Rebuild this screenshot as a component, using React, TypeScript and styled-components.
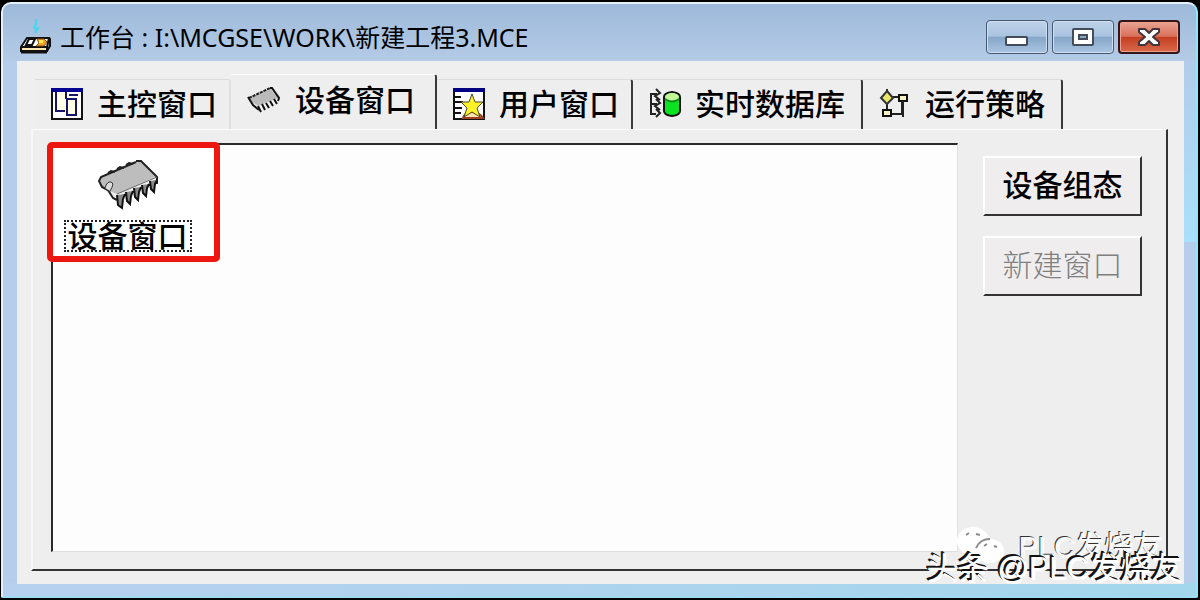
import React from "react";
import styled, { createGlobalStyle } from "styled-components";

const GlobalStyle = createGlobalStyle`
  *, *::before, *::after { box-sizing: border-box; }
  body {
    margin: 0;
    background: #000;
    font-family: "Noto Sans", "Noto Sans CJK SC", sans-serif;
    color: #000;
  }
`;

const Frame = styled.main`
  display: flex;
  flex-direction: column;
  min-height: calc(100vh - 4px);
  margin: 2px 2px 2px 1px;
  padding: 0 12px 12px 14px;
  border: 2px solid #e4f0fb;
  border-right-color: #8ee6fa;
  border-bottom-color: #9fdcf2;
  border-radius: 10px 10px 2px 2px;
  background:
    linear-gradient(#b2cce9, #a9e0fb) right 0 top 56px / 14px 182px no-repeat,
    linear-gradient(90deg, #b7d0ef, #a3d7ec) left 0 bottom 0 / 100% 13px no-repeat,
    linear-gradient(#9db9da, #b4cbe6 56px, #b7cdec 57px);
`;

const TitleBar = styled.header`
  display: flex;
  align-items: center;
  height: 57px;
  padding: 8px 4px 0 2px;
`;

const Title = styled.h1`
  flex: 1;
  margin: 0 0 0 7px;
  font-size: 25px;
  line-height: 32px;
  font-weight: 400;
  white-space: nowrap;
`;

const Controls = styled.div`
  display: flex;
  gap: 4px;
`;

const ControlButton = styled.button<{ $close?: boolean }>`
  display: flex;
  align-items: center;
  justify-content: center;
  width: 62px;
  height: 34px;
  padding: 0;
  border: ${(p) => (p.$close ? "2px solid #33161b" : "1px solid #46586f")};
  border-radius: 4px;
  box-shadow: inset 0 0 0 1px ${(p) => (p.$close ? "#efa08d" : "#cfe0f2")};
  background: ${(p) =>
    p.$close
      ? "linear-gradient(#e9a393, #d9705a 48%, #c43e22 50%, #d9684a)"
      : "linear-gradient(#bed3ea, #a9c3e0 48%, #86a6c8 50%, #a9c5e2)"};
`;

const Client = styled.div`
  flex: 1;
  display: flex;
  flex-direction: column;
  padding: 13px 16px 13px 14px;
  background: #f0eff0;
`;

const TabList = styled.div`
  display: flex;
  align-items: flex-end;
  height: 55px;
  padding-left: 4px;
`;

const Tab = styled.button<{ $active?: boolean; $width: number }>`
  display: flex;
  align-items: center;
  gap: 14px;
  width: ${(p) => p.$width}px;
  height: ${(p) => (p.$active ? 55 : 50)}px;
  padding: 0 0 ${(p) => (p.$active ? 4 : 1)}px 16px;
  border: 0;
  border-top: 1px solid ${(p) => (p.$active ? "#fff" : "#dcdcdc")};
  border-right: 2px solid ${(p) => (p.$active === false ? "#e0e0e0" : "#3a3a3a")};
  border-radius: 0 3px 0 0;
  background: #efeeef;
  font: inherit;
  font-size: 30px;
  line-height: 40px;
  font-weight: 500;
  white-space: nowrap;
  color: #000;
`;

const Panel = styled.section`
  flex: 1;
  display: flex;
  gap: 25px;
  padding: 13px 24px 17px 18px;
  border: 2px solid #333;
  border-top: 1px solid #fbfbfb;
  border-left: 2px solid #fbf6fb;
  background: #eeeeee;
`;

const ItemArea = styled.div`
  flex: 1;
  border: 2px solid #2a2a2a;
  border-right: 1px solid #e2e0ea;
  border-bottom: 1px solid #dedede;
  background: #fdfdfd;
`;

const DeviceItem = styled.button`
  display: flex;
  flex-direction: column;
  align-items: center;
  width: 173px;
  height: 120px;
  margin: -3px 0 0 -6px;
  padding: 11px 12px 0 0;
  border: 6px solid #ee1611;
  border-radius: 5px;
  background: #fff;
  font: inherit;
  color: #000;
`;

const ItemLabel = styled.span`
  display: block;
  width: 128px;
  height: 32px;
  margin-top: 9px;
  border: 2px dotted #222;
  font-size: 30px;
  line-height: 28px;
  font-weight: 500;
  text-align: center;
`;

const Actions = styled.div`
  display: flex;
  flex-direction: column;
  gap: 20px;
  padding-top: 13px;
`;

const ActionButton = styled.button`
  width: 159px;
  height: 60px;
  padding: 0 0 6px;
  border: 2px solid #333;
  border-top-color: #fff;
  border-left-color: #fff;
  background: #efedee;
  font: inherit;
  font-size: 30px;
  font-weight: 500;
  color: #000;
  &:disabled { color: #808080; font-weight: 300; }
`;

const Watermark = styled.div`
  position: absolute;
  right: 18px;
  bottom: 12px;
  width: 260px;
  height: 70px;
  pointer-events: none;
  font-family: "Liberation Sans", "Noto Sans CJK SC", sans-serif;
`;

const MarkLogo = styled.svg`
  position: absolute;
  left: 34px;
  top: 8px;
`;

const MarkBack = styled.span`
  position: absolute;
  right: 20px;
  top: 9px;
  font-size: 29px;
  line-height: 40px;
  white-space: nowrap;
  color: #f8f8f8;
  text-shadow: -1px -1px 0 #333, 1px 1px 0 #fff;
`;

const MarkFront = styled.span`
  position: absolute;
  right: 0;
  top: 31px;
  font-size: 31px;
  line-height: 40px;
  white-space: nowrap;
  color: #fff;
  text-shadow: -1px -1px 0 #111, -2px -2px 0 #111, 1px 1px 0 #fff;
`;

const AppIcon = () => (
  <svg width="34" height="38" viewBox="0 0 34 38" aria-hidden="true">
    <path d="M17 1v5l-2 4 3 2-2 3M20 9l-3 3" stroke="#3fd9f2" strokeWidth="2" fill="none" />
    <path d="M2 29 8 20h22l-2 9v4H2z" fill="#fff" stroke="#111" strokeWidth="2" />
    <path d="M2 29h26M29 20l2 1v7l-3 5" stroke="#111" strokeWidth="2" fill="none" />
    <path d="M2 34h26" stroke="#111" strokeWidth="3" />
    <path d="M3 31h24" stroke="#ffe9b0" strokeWidth="2" />
    <path d="m10 21-3 6h6l3-6z" fill="#fff" stroke="#111" strokeWidth="2" />
    <path d="M18 21h7l3 3-3 4h-8l3-3z" fill="#f2a62c" stroke="#8a4d10" />
    <path d="M20 22h4v3h-4z" fill="#ffe94b" />
  </svg>
);

const WindowIcon = () => (
  <svg width="32" height="32" viewBox="0 0 32 32" aria-hidden="true">
    <path d="M1 2h30v29H1z" fill="#fff" stroke="#111" strokeWidth="2" />
    <path d="M0 0h32v4H0z" fill="#000093" />
    <path d="M5 4h10v18H5z" fill="#ffffe6" />
    <path d="M16 11h9v16h-9z" fill="#ffffe6" />
    <path d="M5 4v19h9M15 4v7M16 11v16h9V11zM18 7h9" fill="none" stroke="#15156a" strokeWidth="2" />
  </svg>
);

const SmallChipIcon = () => (
  <svg width="34" height="28" viewBox="0 0 34 28" aria-hidden="true">
    <path d="M2 11 23 2l9 10-1 4-18 8-8-7z" fill="#f3f3f3" />
    <path d="M3 11 23 2l8 10-20 8-6-4z" fill="#bababa" />
    <path d="M2 12 23 2" fill="none" stroke="#222" strokeWidth="2" strokeDasharray="3 1" />
    <path d="m1 11 5 8 6 5M23 2h2l7 10-1 3" fill="none" stroke="#111" strokeWidth="2" />
    <path d="m11 20 3 6M15 18l3 6M19 17l3 5M23 15l3 5M27 13l3 5" stroke="#111" strokeWidth="2" />
  </svg>
);

const StarIcon = () => (
  <svg width="32" height="32" viewBox="0 0 32 32" aria-hidden="true">
    <path d="M1 2h30v29H1z" fill="#fff" stroke="#111" strokeWidth="2" />
    <path d="M0 0h32v4H0z" fill="#000080" />
    <path d="M2 9h6M2 14h8M2 20h7M2 25h6" stroke="#111" strokeWidth="2" />
    <path d="M10 30q2-6 9-6t11 6z" fill="#ffe3b0" stroke="#a04020" strokeWidth="2" />
    <path d="m19 6 3 8h8l-6 6 3 9-8-5-8 5 3-9-6-6h8z" fill="#fff229" stroke="#4a4526" />
  </svg>
);

const DatabaseIcon = () => (
  <svg width="32" height="32" viewBox="0 0 32 32" aria-hidden="true">
    <path d="M8 6H2v20h5M2 16h6" fill="none" stroke="#222" strokeWidth="2" />
    <path d="m7 1 4 4-5 3 5 4M7 11l4 4-5 3 5 4M7 21l4 4-4 4" fill="none" stroke="#222" strokeWidth="2" />
    <path d="M15 9q0-4 8-5 8 1 8 5v14q0 4-8 5-8-1-8-5z" fill="#0be322" stroke="#111" strokeWidth="2" />
    <ellipse cx="23" cy="9" rx="7" ry="4" fill="#c2f798" />
    <path d="M16 11q7 5 14 0" fill="none" stroke="#128a20" strokeWidth="2" />
  </svg>
);

const StrategyIcon = () => (
  <svg width="32" height="32" viewBox="0 0 32 32" aria-hidden="true">
    <path d="M8 1v4M13 9h8M8 14v10M12 26h11V13" fill="none" stroke="#222" strokeWidth="2" />
    <path d="m8 3 6 7-6 6-6-6z" fill="#e9e86a" stroke="#333" strokeWidth="2" />
    <path d="M20 7h8v6h-8zM4 22h8v6H4z" fill="#f4f3c8" stroke="#111" strokeWidth="2" />
    <path d="M24 13v16" stroke="#222" strokeWidth="2" />
  </svg>
);

const ChipIcon = () => (
  <svg width="62" height="52" viewBox="0 0 62 52" aria-hidden="true">
    <path d="M2 22 5 17 39 3h5l15 15v8L23 43l-9-5-4-5-7-4z" fill="#eee" />
    <path d="m2 22 3-4L39 3h5l14 15-38 17-5-2-5-1-6-5z" fill="#bdbdbd" />
    <path d="M39 2h5l16 16v7M39 3 4 18l-2 4 3 6 6 3 5 8 4 2" fill="none" stroke="#222" strokeWidth="2" />
    <path d="M60 18 20 35" stroke="#666" />
    <path d="M8 29q2-7 6-6t-1 9" fill="#ddd" stroke="#333" />
    <path d="m20 36 1 10 4 3 1-9 2-5M29 33l1 9 3 3 1-8 2-5M37 29l1 9 3 3 1-8 2-5M45 26l1 8 3 3 1-8 2-4M53 22l1 8 3 3 1-8 2-4" fill="#888" stroke="#111" strokeWidth="2" />
    <path d="m11 14 3-2 4 1M20 10l3-2 4 1M29 6l3-2 4 1" fill="none" stroke="#222" strokeWidth="2" />
  </svg>
);

const tabs = [
  { label: "主控窗口", icon: <WindowIcon />, width: 196, active: false },
  { label: "设备窗口", icon: <SmallChipIcon />, width: 206, active: true },
  { label: "用户窗口", icon: <StarIcon />, width: 196 },
  { label: "实时数据库", icon: <DatabaseIcon />, width: 230 },
  { label: "运行策略", icon: <StrategyIcon />, width: 200 },
];

export default function App() {
  return (
    <>
      <GlobalStyle />
      <Frame>
        <TitleBar>
          <AppIcon />
          <Title>工作台 : I:\MCGSE\WORK\新建工程3.MCE</Title>
          <Controls>
            <ControlButton aria-label="最小化">
              <svg width="24" height="18" viewBox="0 0 24 18"><rect x="1" y="9" width="21" height="8" rx="1" fill="#fff" stroke="#444b59" strokeWidth="2" /></svg>
            </ControlButton>
            <ControlButton aria-label="最大化">
              <svg width="22" height="18" viewBox="0 0 22 18"><rect x="1" y="1" width="20" height="16" rx="1" fill="#fff" stroke="#444b59" strokeWidth="2" /><rect x="7" y="7" width="8" height="4" fill="#86a6c8" stroke="#444b59" strokeWidth="2" /></svg>
            </ControlButton>
            <ControlButton $close aria-label="关闭">
              <svg width="22" height="18" viewBox="0 0 22 18"><path d="M1 1h6l4 4 4-4h6v3l-6 5 6 5v3h-6l-4-4-4 4H1v-3l6-5-6-5z" fill="#fff" stroke="#44343b" strokeWidth="2" strokeLinejoin="round" /></svg>
            </ControlButton>
          </Controls>
        </TitleBar>
        <Client>
          <TabList role="tablist">
            {tabs.map((t) => (
              <Tab key={t.label} role="tab" aria-selected={!!t.active} $active={t.active} $width={t.width}>
                {t.icon}
                {t.label}
              </Tab>
            ))}
          </TabList>
          <Panel>
            <ItemArea>
              <DeviceItem>
                <ChipIcon />
                <ItemLabel>设备窗口</ItemLabel>
              </DeviceItem>
            </ItemArea>
            <Actions>
              <ActionButton>设备组态</ActionButton>
              <ActionButton disabled>新建窗口</ActionButton>
            </Actions>
          </Panel>
        </Client>
      </Frame>
      <Watermark>
        <MarkLogo width="50" height="40" viewBox="0 0 50 40" aria-hidden="true">
          <ellipse cx="17" cy="15" rx="16" ry="14" fill="#fff" />
          <ellipse cx="34" cy="25" rx="14" ry="12" fill="#fff" />
          <path d="M20 22q4-9 14-9M10 9l3-2M20 8l4 1M28 20l3-2M38 20l3 1" fill="none" stroke="#8c8c8c" strokeWidth="2" />
        </MarkLogo>
        <MarkBack>PLC发烧友</MarkBack>
        <MarkFront>头条 @PLC发烧友</MarkFront>
      </Watermark>
    </>
  );
}
